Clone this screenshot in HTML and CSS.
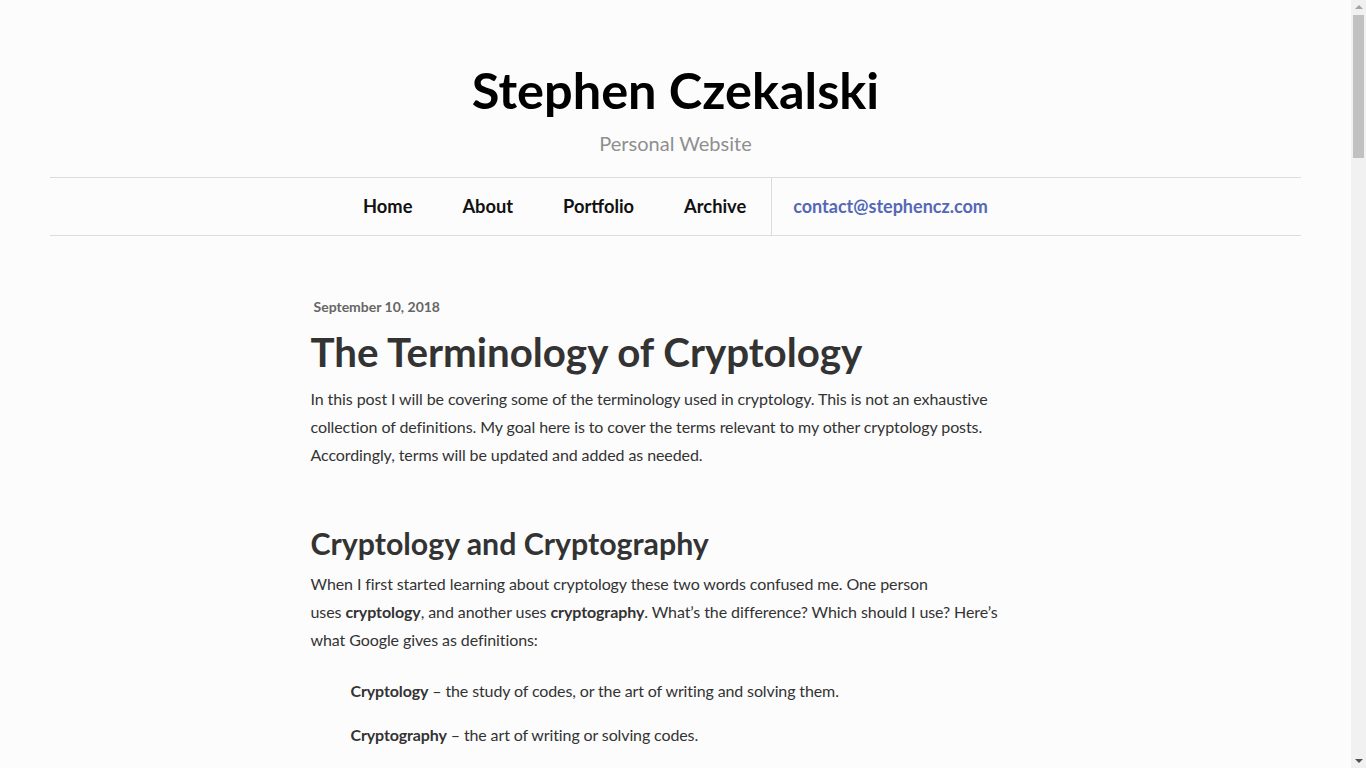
FILE: index.html
```html
<!DOCTYPE html>
<html lang="en">
<head>
<meta charset="utf-8">
<title>The Terminology of Cryptology – Stephen Czekalski</title>
<link rel="stylesheet" href="styles.css">
</head>
<body>
<div class="page">
<header class="site-header">
  <h1 class="site-title">Stephen Czekalski</h1>
  <p class="site-tagline">Personal Website</p>
  <nav class="site-nav">
    <ul class="nav-list">
      <li class="nav-item"><a href="#">Home</a></li>
      <li class="nav-item"><a href="#">About</a></li>
      <li class="nav-item"><a href="#">Portfolio</a></li>
      <li class="nav-item"><a href="#">Archive</a></li>
      <li class="nav-item nav-contact"><a href="#">contact@stephencz.com</a></li>
    </ul>
  </nav>
</header>
<main class="post">
  <p class="post-date">September 10, 2018</p>
  <h1 class="post-title">The Terminology of Cryptology</h1>
  <p class="post-p">In this post I will be covering some of the terminology used in cryptology. This is not an exhaustive collection of definitions. My goal here is to cover the terms relevant to my other cryptology posts. Accordingly, terms will be updated and added as needed.</p>

  <h2 class="post-h2">Cryptology and Cryptography</h2>
  <p class="post-p">When I first started learning about cryptology these two words confused me. One person uses&nbsp;<strong>cryptology</strong>, and another uses <strong>cryptography</strong>. What’s the difference? Which should I use? Here’s what Google gives as definitions:</p>
  <blockquote class="definitions">
    <p class="def"><strong>Cryptology</strong> – the study of codes, or the art of writing and solving them.</p>
    <p class="def"><strong>Cryptography</strong> – the art of writing or solving codes.</p>
  </blockquote>
  <p class="post-p">The two definitions are nearly identical, and in casual conversation the words are often used interchangeably. In this series I use cryptology to refer to the field as a whole, and cryptography to refer to the practice of creating ciphers and codes.</p>

  <h2 class="post-h2">Cryptanalysis</h2>
  <p class="post-p">Cryptanalysis is the study of analyzing information systems in order to uncover their hidden aspects. In other words, it is the art of breaking ciphers and codes without knowing the key that was used to create them.</p>

  <h2 class="post-h2">Plaintext and Ciphertext</h2>
  <p class="post-p"><strong>Plaintext</strong> is the original, readable message that a sender wants to transmit. <strong>Ciphertext</strong> is the result of applying a cipher to the plaintext. Ciphertext should be unreadable to anyone who does not know how to reverse the process.</p>

  <h2 class="post-h2">Encryption and Decryption</h2>
  <p class="post-p"><strong>Encryption</strong> is the process of turning plaintext into ciphertext. <strong>Decryption</strong> is the reverse process, turning ciphertext back into plaintext. Both processes are usually performed with the help of a key.</p>

  <h2 class="post-h2">Cipher</h2>
  <p class="post-p">A cipher is an algorithm for performing encryption or decryption. A cipher operates on individual letters, or on small groups of letters, rather than on whole words or phrases.</p>
  <blockquote class="definitions">
    <p class="def"><strong>Substitution Cipher</strong> – a cipher that replaces units of plaintext with other units.</p>
    <p class="def"><strong>Transposition Cipher</strong> – a cipher that rearranges the order of units of plaintext.</p>
  </blockquote>

  <h2 class="post-h2">Code</h2>
  <p class="post-p">A code replaces whole words or phrases with other words, numbers or symbols. Codes usually rely on a codebook which both the sender and the receiver must possess.</p>

  <h2 class="post-h2">Key</h2>
  <p class="post-p">A key is a piece of information that determines the output of a cipher. Without the key, a well designed cipher should be extremely difficult to decrypt, even if the algorithm itself is known.</p>
  <blockquote class="definitions">
    <p class="def"><strong>Symmetric Key</strong> – the same key is used for both encryption and decryption.</p>
    <p class="def"><strong>Asymmetric Key</strong> – different keys are used for encryption and decryption.</p>
  </blockquote>

  <h2 class="post-h2">Keyspace</h2>
  <p class="post-p">The keyspace of a cipher is the set of all possible keys that could be used with it. A larger keyspace makes a brute force attack, trying every possible key, more time consuming.</p>

  <h2 class="post-h2">Frequency Analysis</h2>
  <p class="post-p">Frequency analysis is the study of how often letters or groups of letters appear in a ciphertext. Because some letters appear far more often than others in natural language, frequency analysis can be used to break many classical ciphers.</p>

  <h2 class="post-h2">Monoalphabetic and Polyalphabetic</h2>
  <p class="post-p">A <strong>monoalphabetic</strong> cipher uses a single substitution alphabet for the whole message. A <strong>polyalphabetic</strong> cipher switches between several substitution alphabets as the message is encrypted, which makes frequency analysis much harder.</p>

  <h2 class="post-h2">Nomenclator</h2>
  <p class="post-p">A nomenclator is a combination of a cipher and a code. It uses a substitution alphabet for most of the message along with a small list of code words for common names and phrases.</p>

  <h2 class="post-h2">Steganography</h2>
  <p class="post-p">Steganography is the practice of hiding a message so that nobody suspects it exists at all. Unlike cryptography, which hides the meaning of a message, steganography hides the message itself.</p>

  <h2 class="post-h2">One-Time Pad</h2>
  <p class="post-p">A one-time pad is a cipher in which the key is random, at least as long as the message, and never reused. When used correctly it is impossible to break.</p>

  <h2 class="post-h2">Brute Force Attack</h2>
  <p class="post-p">A brute force attack is an attempt to decrypt a ciphertext by trying every key in the keyspace until the correct one is found.</p>

  <h2 class="post-h2">Known Plaintext Attack</h2>
  <p class="post-p">A known plaintext attack is an attack in which the cryptanalyst has access to both a piece of plaintext and its matching ciphertext, and uses them to discover the key.</p>

  <h2 class="post-h2">Conclusion</h2>
  <p class="post-p">That covers the terms I use most often in my other cryptology posts. As I write more, I will come back and add new terms to this list as they are needed.</p>
</main>
<footer class="site-footer">
  <p class="footer-text">© 2018 Stephen Czekalski</p>
</footer>
</div>
<div class="scrollbar" aria-hidden="true">
  <span class="sb-arrow sb-up"></span>
  <span class="sb-thumb"></span>
  <span class="sb-arrow sb-down"></span>
</div>
</body>
</html>
```
FILE: styles.css
```css
html, body {
  margin: 0;
  padding: 0;
}
body {
  background: #fcfcfc;
  color: #333;
  font-family: Lato, "Noto Sans", sans-serif;
}
a {
  text-decoration: none;
}
.page {
  margin-right: 15px;
}
.site-header {
  margin: 0 50px;
  padding-top: 60px;
  text-align: center;
}
.site-title {
  margin: 0;
  font-size: 50.5px;
  line-height: 60px;
  font-weight: 700;
  color: #000;
}
.site-tagline {
  margin: 8px 0 19px;
  font-size: 20px;
  line-height: 30px;
  color: #8f8f8f;
}
.site-nav {
  border-top: 1px solid #dcdcdc;
  border-bottom: 1px solid #dcdcdc;
}
.nav-list {
  list-style: none;
  margin: 0;
  padding: 0;
  display: flex;
  justify-content: center;
}
.nav-item a {
  display: block;
  padding: 0 25px;
  line-height: 57px;
  font-size: 18.3px;
  font-weight: 700;
  color: #111;
}
.nav-contact {
  border-left: 1px solid #dcdcdc;
}
.nav-contact a {
  padding: 0 25px 0 21px;
  font-size: 18px;
  color: #5468b5;
}
.post {
  box-sizing: border-box;
  width: 730px;
  padding-right: 12px;
  margin: 61px auto 0;
}
.post-date {
  margin: 0 0 0 3px;
  font-size: 14px;
  line-height: 20px;
  font-weight: 700;
  color: #666;
}
.post-title {
  margin: 11px 0 9px;
  font-size: 40.3px;
  line-height: 48px;
  font-weight: 700;
  color: #333;
}
.post-p {
  margin: 0;
  font-size: 16px;
  line-height: 28px;
  letter-spacing: -0.09px;
}
.post-p strong, .def strong {
  font-weight: 700;
}
.post-h2 {
  margin: 54px 0 7px;
  font-size: 30.3px;
  line-height: 40px;
  font-weight: 700;
  color: #333;
}
.definitions {
  margin: 23px 0 16px 40px;
}
.def {
  margin: 0 0 16px;
  font-size: 16px;
  line-height: 28px;
  letter-spacing: -0.12px;
}
.site-footer {
  margin: 120px 50px 0;
  padding: 40px 0 60px;
  border-top: 1px solid #dcdcdc;
  text-align: center;
}
.footer-text {
  margin: 0;
  font-size: 14px;
  color: #8f8f8f;
}
.scrollbar {
  position: fixed;
  top: 0;
  right: 0;
  bottom: 0;
  width: 15px;
  background: #f1f1f1;
  display: flex;
  flex-direction: column;
  align-items: center;
}
.sb-arrow {
  width: 0;
  height: 0;
  border-left: 4px solid transparent;
  border-right: 4px solid transparent;
}
.sb-up {
  margin-top: 5px;
  border-bottom: 4px solid #a3a3a3;
}
.sb-thumb {
  width: 11px;
  height: 143px;
  margin-top: 6px;
  background: #c1c1c1;
}
.sb-down {
  margin-top: auto;
  margin-bottom: 5px;
  border-top: 4px solid #505050;
}
```
